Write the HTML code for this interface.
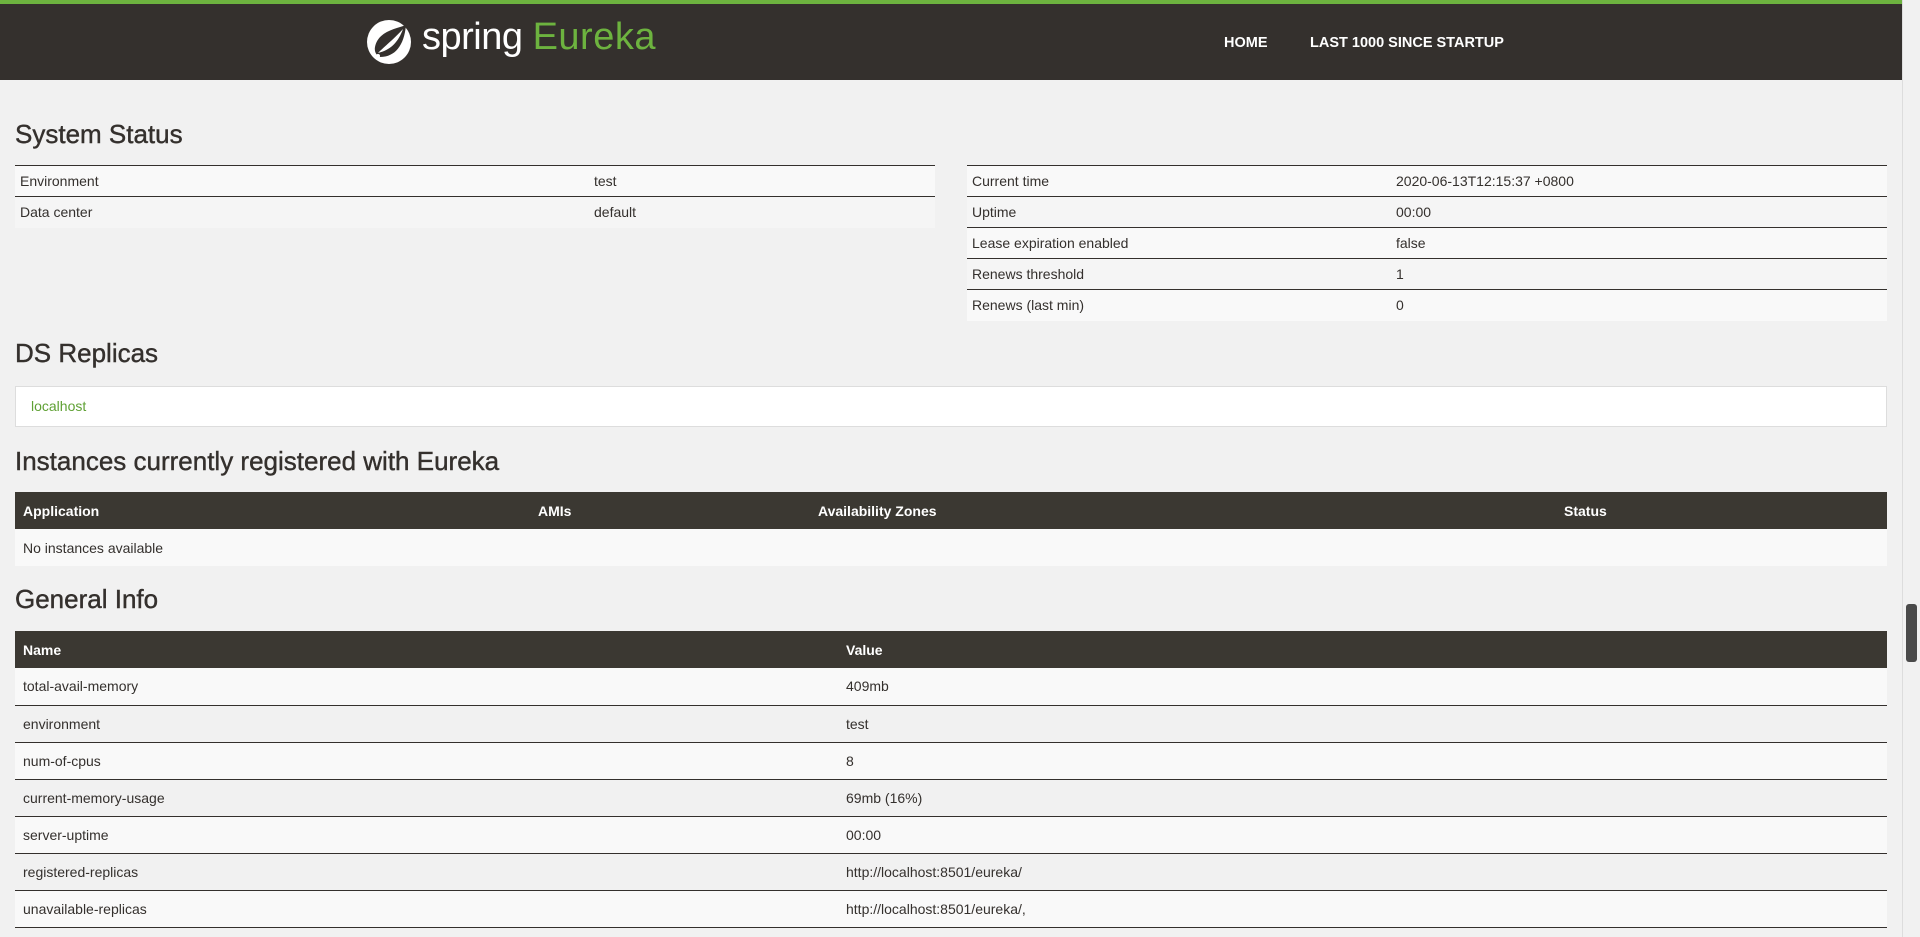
<!DOCTYPE html>
<html style="height:937px;overflow:hidden"><head><style>
*{margin:0;padding:0;box-sizing:border-box}
body{width:1920px;height:937px;overflow:hidden;background:#f1f1f1;font-family:"Liberation Sans",sans-serif;color:#34302d;font-size:14px;position:relative}
.top{position:absolute;left:0;top:0;width:1902px;height:80px;background:#34302d;border-top:4px solid #6db33f}
.logo{position:absolute;left:366px;top:15px}
.brand{position:absolute;left:422px;top:12px;font-size:38px;color:#fff;letter-spacing:-0.5px}
.brand span{color:#6db33f;letter-spacing:0.5px}
.nav{position:absolute;top:31px;font-size:14.5px;font-weight:bold;color:#fff}
h2{position:absolute;left:15px;font-size:26px;font-weight:normal;color:#34302d;-webkit-text-stroke:0.4px #34302d}
.t{position:absolute;border-collapse:collapse}
.t td{height:31px;padding:0 5px;border-top:1px solid #34302d;font-size:14px}
.t tr:nth-child(odd) td{background:#f9f9f9}
.t tr:nth-child(even) td{background:#f5f5f5}
.g{position:absolute;left:15px;width:1872px;border-collapse:collapse}
.g th{background:#3b3832;color:#fff;text-align:left;height:37px;padding:0 8px;font-size:14px}
.g td{height:37px;padding:0 8px;border-top:1px solid #34302d}
.g tr:nth-child(even) td{background:#f9f9f9}
.g tr:nth-child(odd) td{background:#f1f1f1}
.sb{position:absolute;right:0;top:0;width:18px;height:937px;background:#f1f1f1;border-left:1px solid #ddd}
.th{position:absolute;right:3px;top:604px;width:11px;height:58px;background:#4a4a4a;border-radius:3px}
</style></head><body>
<div class="top">
<svg class="logo" width="46" height="46" viewBox="0 0 46 46"><circle cx="23" cy="23" r="22" fill="#fff"/><path d="M40 6 C30 10 12 12 9 28 C8 33 11 37 14 38 C28 38 38 28 40 6Z" fill="#34302d"/><path d="M37 10 C32 24 24 31 12 34 C20 26 28 20 37 10Z" fill="#fff"/><circle cx="12" cy="37" r="2" fill="#fff"/></svg>
<div class="brand">spring <span>Eureka</span></div>
<div class="nav" style="left:1224px">HOME</div>
<div class="nav" style="left:1310px">LAST 1000 SINCE STARTUP</div>
</div>
<h2 style="top:119px">System Status</h2>
<table class="t" style="left:15px;top:165px;width:920px"><colgroup><col style="width:574px"><col></colgroup>
<tr><td>Environment</td><td>test</td></tr><tr><td>Data center</td><td>default</td></tr></table>
<table class="t" style="left:967px;top:165px;width:920px"><colgroup><col style="width:424px"><col></colgroup>
<tr><td>Current time</td><td>2020-06-13T12:15:37 +0800</td></tr><tr><td>Uptime</td><td>00:00</td></tr><tr><td>Lease expiration enabled</td><td>false</td></tr><tr><td>Renews threshold</td><td>1</td></tr><tr><td>Renews (last min)</td><td>0</td></tr></table>
<h2 style="top:338px">DS Replicas</h2>
<div style="position:absolute;left:15px;top:386px;width:1872px;height:41px;background:#fff;border:1px solid #ddd;padding:11px 15px;color:#5fa134">localhost</div>
<h2 style="top:446px">Instances currently registered with Eureka</h2>
<table class="g" style="top:492px"><colgroup><col style="width:515px"><col style="width:280px"><col style="width:746px"><col></colgroup>
<tr><th>Application</th><th>AMIs</th><th>Availability Zones</th><th>Status</th></tr>
<tr><td colspan="4" style="background:#f9f9f9;border-top:none">No instances available</td></tr></table>
<h2 style="top:584px">General Info</h2>
<table class="g" style="top:631px"><colgroup><col style="width:823px"><col></colgroup>
<tr><th>Name</th><th>Value</th></tr>
<tr><td style="border-top:none">total-avail-memory</td><td style="border-top:none">409mb</td></tr>
<tr><td>environment</td><td>test</td></tr>
<tr><td>num-of-cpus</td><td>8</td></tr>
<tr><td>current-memory-usage</td><td>69mb (16%)</td></tr>
<tr><td>server-uptime</td><td>00:00</td></tr>
<tr><td>registered-replicas</td><td>http://localhost:8501/eureka/</td></tr>
<tr><td>unavailable-replicas</td><td>http://localhost:8501/eureka/,</td></tr>
<tr><td>&nbsp;</td><td></td></tr>
</table>
<div class="sb"><div class="th"></div></div>
</body></html>
